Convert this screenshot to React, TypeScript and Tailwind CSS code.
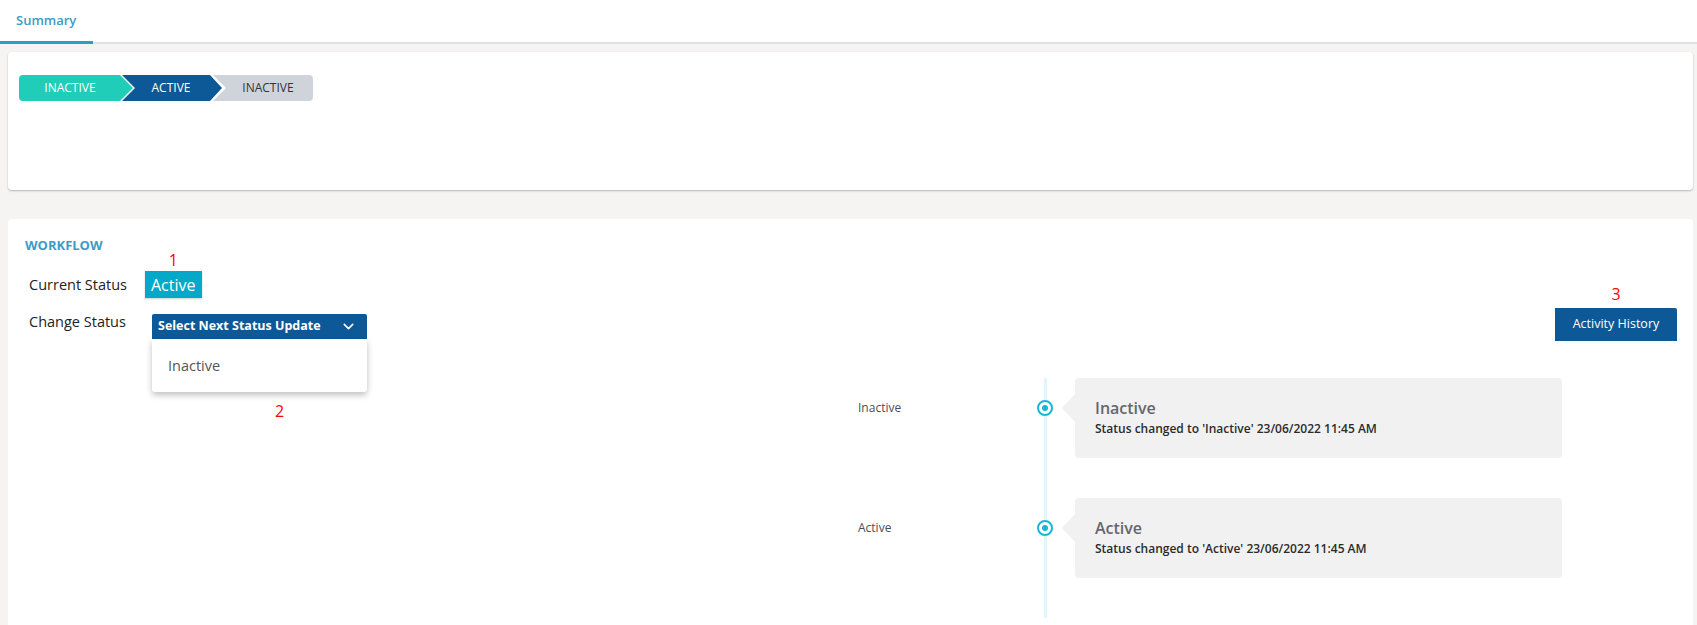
import { ChevronDown } from "lucide-react";

const steps = [
  { label: "INACTIVE", cls: "w-[114px] bg-[#20cdb8] text-white rounded-l-[4px] pr-[12px] [clip-path:polygon(0_0,calc(100%-13px)_0,100%_50%,calc(100%-13px)_100%,0_100%)]" },
  { label: "ACTIVE", cls: "w-[100px] -ml-[11px] bg-[#0d5896] text-white pr-[2px] [clip-path:polygon(0_0,calc(100%-12px)_0,100%_50%,calc(100%-12px)_100%,0_100%,13px_50%)]" },
  { label: "INACTIVE", cls: "w-[100px] -ml-[9px] bg-[#cfd4db] text-[#333] pl-[10px] rounded-r-[4px] [clip-path:polygon(0_0,100%_0,100%_100%,0_100%,13px_50%)]" },
];

const history = [
  { label: "Inactive", title: "Inactive", text: "Status changed to 'Inactive' 23/06/2022 11:45 AM" },
  { label: "Active", title: "Active", text: "Status changed to 'Active' 23/06/2022 11:45 AM" },
];

export default function App() {
  return (
    <div className="h-[625px] overflow-hidden bg-[#f5f4f2] font-['Open_Sans',sans-serif]">
      {/* Tabs */}
      <div className="h-[44px] bg-white border-b-2 border-[#dfe1e6] flex">
        <div className="w-[93px] -mb-[2px] border-b-[3px] border-[#2b9ec6] pl-4 pt-[11px] text-[13px] font-semibold text-[#3d9bc8]">
          Summary
        </div>
      </div>

      {/* Stepper card */}
      <div className="ml-[8px] mr-[4px] mt-[8px] h-[138px] bg-white rounded-[4px] shadow-[0_1px_2px_rgba(0,0,0,0.25)] pt-[23px] pl-[11px]">
        <div className="flex">
          {steps.map((s, i) => (
            <div key={i} className={`h-[26px] flex items-center justify-center text-[12px] ${s.cls}`}>
              {s.label}
            </div>
          ))}
        </div>
      </div>

      {/* Workflow card */}
      <div className="ml-[8px] mr-[4px] mt-[29px] h-[500px] bg-white rounded-[4px] pt-[17px] pl-[17px] pr-[16px]">
        <div className="text-[13px] font-bold text-[#3d9bc8] leading-[18px]">WORKFLOW</div>

        <div className="flex justify-between items-start">
          <div className="pl-1">
            <div className="mt-[17px] h-[27px] flex items-center">
              <span className="w-[116px] text-[14.5px] text-[#222]">Current Status</span>
              <span className="relative h-[27px] px-[6px] flex items-center bg-[#04a8c9] text-white text-[16px] shadow-[0_1px_2px_rgba(0,0,0,0.2)]">
                <span className="absolute -top-[23px] left-0 right-0 text-center text-[16px] text-[#ff0000]">1</span>
                Active
              </span>
            </div>
            <div className="mt-[16px] flex items-start">
              <span className="w-[123px] text-[14.5px] text-[#222] -mt-[3px]">Change Status</span>
              <div className="relative">
                <button className="w-[215px] h-[25px] bg-[#0d5896] rounded-t-[2px] flex items-center justify-between pl-[6px] pr-[10px] text-white text-[12.5px] font-bold">
                  Select Next Status Update
                  <ChevronDown className="w-[17px] h-[17px]" strokeWidth={2.25} />
                </button>
                <div className="absolute top-[25px] left-0 w-[215px]">
                  <div className="h-[53px] bg-white rounded-b-[3px] shadow-[0_3px_6px_rgba(0,0,0,0.25)] pl-[16px] flex items-center text-[14.5px] text-[#555]">
                    Inactive
                  </div>
                  <div className="pt-[11px] pl-[123px] text-[16px] text-[#ff0000] leading-none">2</div>
                </div>
              </div>
            </div>
          </div>

          <div className="relative mt-[54px]">
            <span className="absolute -top-[26px] left-0 right-0 text-center text-[16px] text-[#ff0000]">3</span>
            <button className="w-[122px] h-[33px] bg-[#0d5896] rounded-tr-[2px] text-white text-[12.5px]">
              Activity History
            </button>
          </div>
        </div>

        {/* Timeline */}
        <div className="relative mt-[37px] ml-[833px] pb-[40px]">
          <div className="absolute left-[186px] top-0 bottom-0 w-[3px] bg-[#e1f6fb]" />
          {history.map((h, i) => (
            <div key={i} className={`relative flex items-start ${i > 0 ? "mt-[40px]" : ""}`}>
              <div className="w-[179px] pt-[21px] text-[12px] text-[#4a4d57]">{h.label}</div>
              <div className="relative mt-[22px] w-[16px] h-[16px] rounded-full border-2 border-[#18b6d7] bg-white flex items-center justify-center">
                <div className="w-[6px] h-[6px] rounded-full bg-[#18b6d7]" />
              </div>
              <div className="relative ml-[22px] w-[487px] h-[80px] bg-[#f1f1f1] rounded-[4px] pl-[20px] pt-[19px]">
                <div className="absolute -left-[13px] top-[16px] w-0 h-0 border-y-[14px] border-y-transparent border-r-[13px] border-r-[#f1f1f1]" />
                <div className="text-[16px] leading-[22px] font-semibold text-[#66666e]">{h.title}</div>
                <div className="text-[12px] font-semibold text-[#2b2b2b] leading-[20px]">{h.text}</div>
              </div>
            </div>
          ))}
        </div>
      </div>
    </div>
  );
}
